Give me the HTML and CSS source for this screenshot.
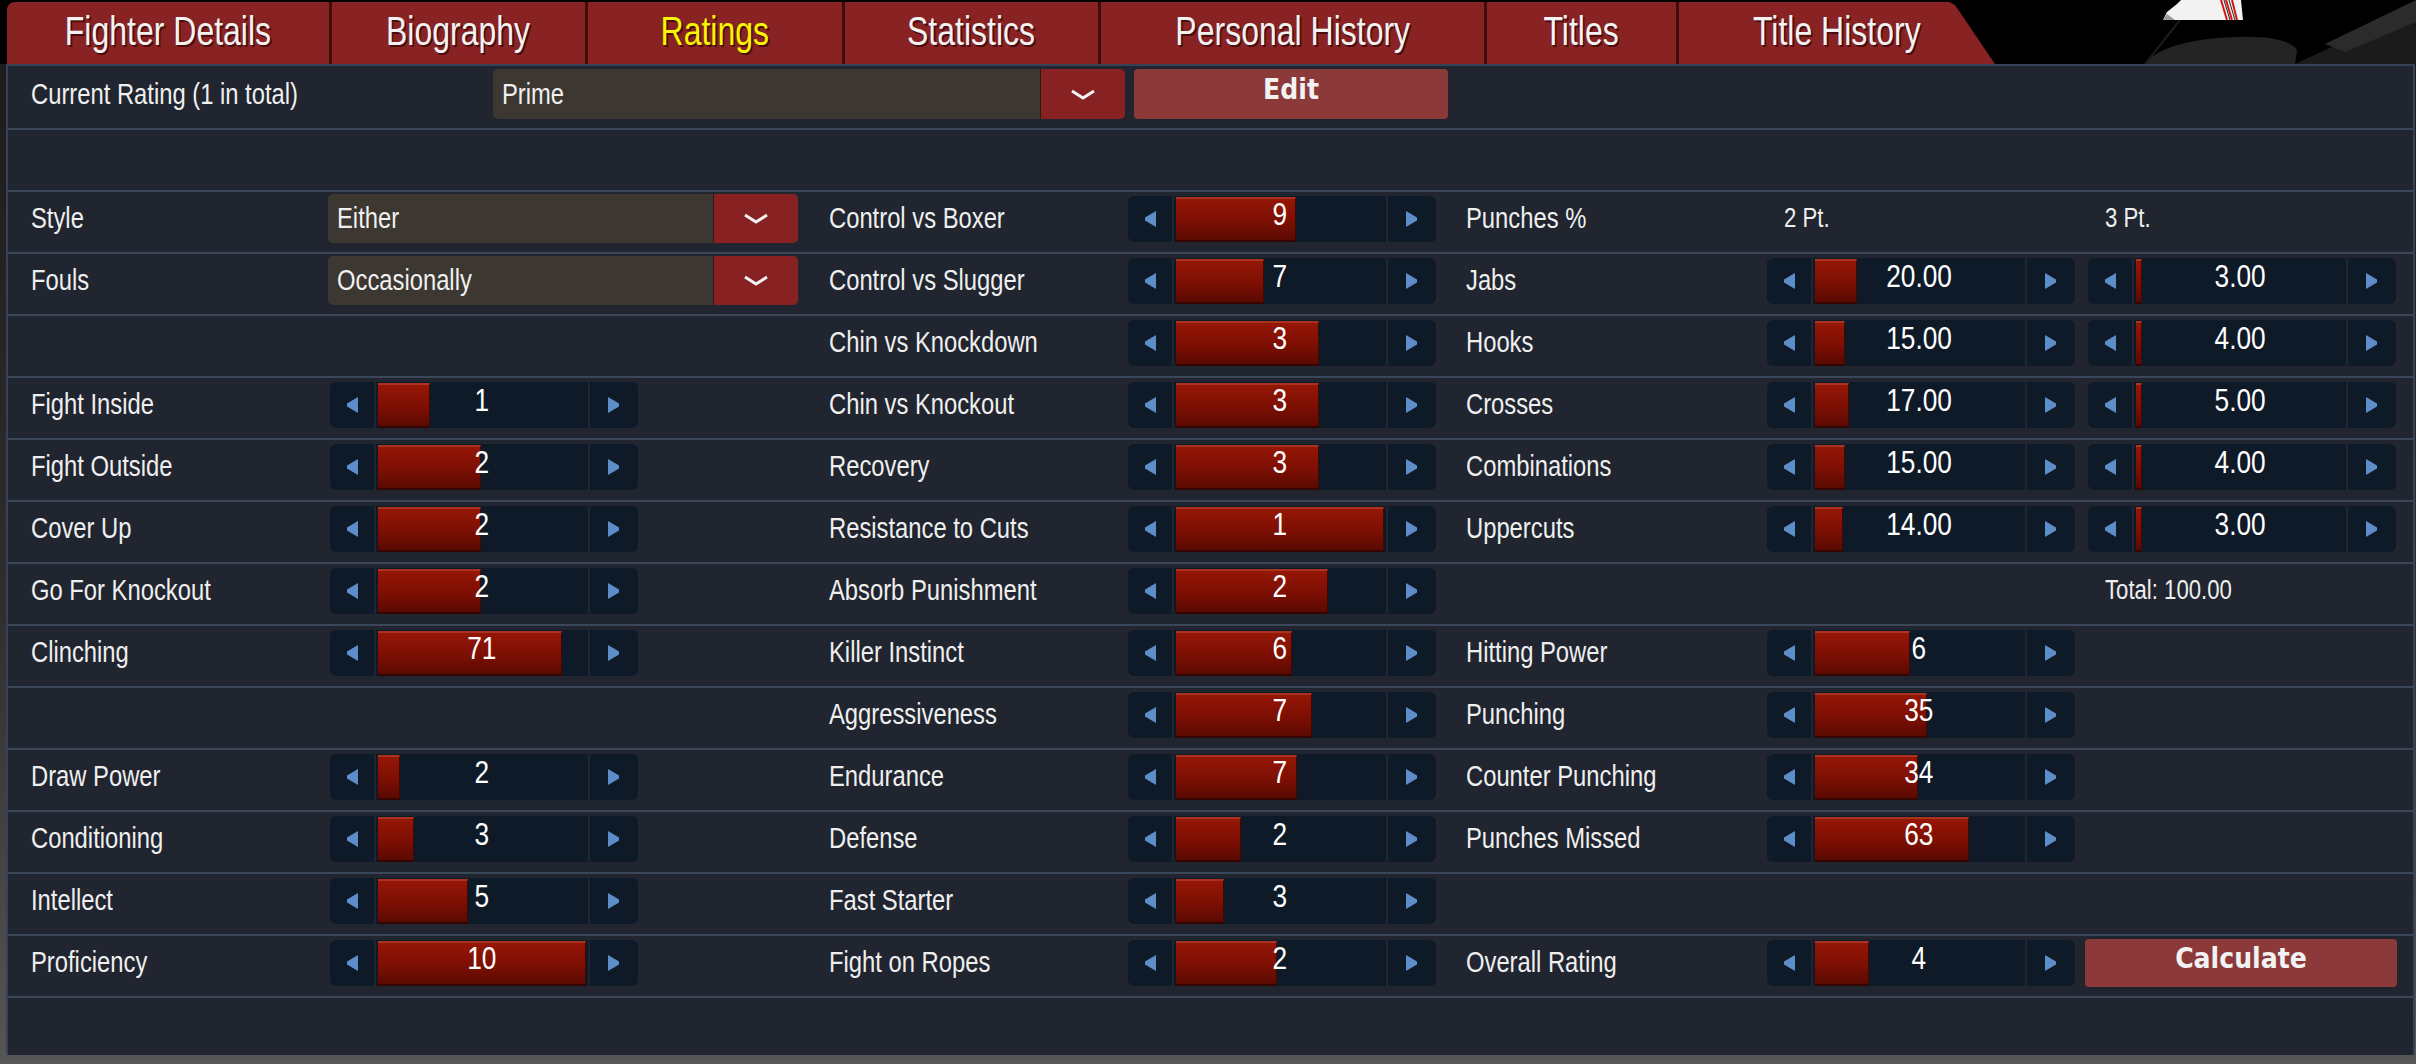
FILE: index.html
```html
<!DOCTYPE html>
<html lang="en">
<head>
<meta charset="utf-8">
<title>Ratings</title>
<link rel="stylesheet" href="styles.css">
</head>
<body>
<div class="tabbar">
  <div class="tabs">
    <div class="tab t1"><span>Fighter Details</span></div>
    <div class="tab t2"><span>Biography</span></div>
    <div class="tab t3 active"><span>Ratings</span></div>
    <div class="tab t4"><span>Statistics</span></div>
    <div class="tab t5"><span>Personal History</span></div>
    <div class="tab t6"><span>Titles</span></div>
    <div class="tab t7"><span>Title History</span></div>
  </div>
  <div class="hero">
    <svg width="421" height="64" viewBox="0 0 421 64">
      <rect width="421" height="64" fill="#000"/>
      <path d="M150 64 Q168 40 240 37 Q292 35 302 50 L300 64 Z" fill="#242424"/>
      <path d="M300 64 L421 8 L421 64 Z" fill="#1b1b1b"/>
      <path d="M330 44 L421 0 L421 22 L350 52 Z" fill="#2b2b2b"/>
      <path d="M185 20 L150 64" stroke="#1e1e1e" stroke-width="2"/>
      <path d="M168 20 L172 12 L182 4 L186 0 L246 0 L248 20 Z" fill="#f2f2f2"/>
      <path d="M172 14 L180 20 L168 20 Z" fill="#9a9a9a"/>
      <path d="M226 0 L232 20 M231 0 L237 20 M237 0 L242 20" stroke="#d01818" stroke-width="2"/>
      <path d="M229 0 L235 20 M234 0 L240 20" stroke="#222" stroke-width="1"/>
    </svg>
  </div>
</div>

<div class="panel">
  <div class="row head">
    <div class="lbl wide">Current Rating (1 in total)</div>
    <div class="dd big"><div class="dd-text"><span>Prime</span></div><div class="dd-btn"><svg class="chev" width="26" height="11" viewBox="0 0 26 11"><path d="M2 2 L13 9 L24 2"/></svg></div></div>
    <div class="btn edit">Edit</div>
  </div>
  <div class="row"></div>

  <div class="row">
    <div class="cell c1"><div class="lbl">Style</div><div class="dd"><div class="dd-text"><span>Either</span></div><div class="dd-btn"><svg class="chev" width="26" height="11" viewBox="0 0 26 11"><path d="M2 2 L13 9 L24 2"/></svg></div></div></div>
    <div class="cell c2"><div class="lbl">Control vs Boxer</div>
      <div class="slider"><div class="arr"><svg width="12" height="16" viewBox="0 0 12 16"><path d="M12 0V16L1 9.5V6.5Z"/></svg></div><div class="track"><div class="fill" style="width:120px"></div><span class="val">9</span></div><div class="arr r"><svg width="12" height="16" viewBox="0 0 12 16"><path d="M0 0V16L11 9.5V6.5Z"/></svg></div></div></div>
    <div class="cell c3"><div class="lbl">Punches %</div><div class="slot"><span>2 Pt.</span></div><div class="slot s2"><span>3 Pt.</span></div></div>
  </div>

  <div class="row">
    <div class="cell c1"><div class="lbl">Fouls</div><div class="dd"><div class="dd-text"><span>Occasionally</span></div><div class="dd-btn"><svg class="chev" width="26" height="11" viewBox="0 0 26 11"><path d="M2 2 L13 9 L24 2"/></svg></div></div></div>
    <div class="cell c2"><div class="lbl">Control vs Slugger</div>
      <div class="slider"><div class="arr"><svg width="12" height="16" viewBox="0 0 12 16"><path d="M12 0V16L1 9.5V6.5Z"/></svg></div><div class="track"><div class="fill" style="width:88px"></div><span class="val">7</span></div><div class="arr r"><svg width="12" height="16" viewBox="0 0 12 16"><path d="M0 0V16L11 9.5V6.5Z"/></svg></div></div></div>
    <div class="cell c3"><div class="lbl">Jabs</div>
      <div class="slider"><div class="arr"><svg width="12" height="16" viewBox="0 0 12 16"><path d="M12 0V16L1 9.5V6.5Z"/></svg></div><div class="track"><div class="fill" style="width:42px"></div><span class="val">20.00</span></div><div class="arr r"><svg width="12" height="16" viewBox="0 0 12 16"><path d="M0 0V16L11 9.5V6.5Z"/></svg></div></div>
      <div class="slider s2"><div class="arr"><svg width="12" height="16" viewBox="0 0 12 16"><path d="M12 0V16L1 9.5V6.5Z"/></svg></div><div class="track"><div class="fill" style="width:6px"></div><span class="val">3.00</span></div><div class="arr r"><svg width="12" height="16" viewBox="0 0 12 16"><path d="M0 0V16L11 9.5V6.5Z"/></svg></div></div></div>
  </div>

  <div class="row">
    <div class="cell c1"></div>
    <div class="cell c2"><div class="lbl">Chin vs Knockdown</div>
      <div class="slider"><div class="arr"><svg width="12" height="16" viewBox="0 0 12 16"><path d="M12 0V16L1 9.5V6.5Z"/></svg></div><div class="track"><div class="fill" style="width:143px"></div><span class="val">3</span></div><div class="arr r"><svg width="12" height="16" viewBox="0 0 12 16"><path d="M0 0V16L11 9.5V6.5Z"/></svg></div></div></div>
    <div class="cell c3"><div class="lbl">Hooks</div>
      <div class="slider"><div class="arr"><svg width="12" height="16" viewBox="0 0 12 16"><path d="M12 0V16L1 9.5V6.5Z"/></svg></div><div class="track"><div class="fill" style="width:30px"></div><span class="val">15.00</span></div><div class="arr r"><svg width="12" height="16" viewBox="0 0 12 16"><path d="M0 0V16L11 9.5V6.5Z"/></svg></div></div>
      <div class="slider s2"><div class="arr"><svg width="12" height="16" viewBox="0 0 12 16"><path d="M12 0V16L1 9.5V6.5Z"/></svg></div><div class="track"><div class="fill" style="width:6px"></div><span class="val">4.00</span></div><div class="arr r"><svg width="12" height="16" viewBox="0 0 12 16"><path d="M0 0V16L11 9.5V6.5Z"/></svg></div></div></div>
  </div>

  <div class="row">
    <div class="cell c1"><div class="lbl">Fight Inside</div>
      <div class="slider"><div class="arr"><svg width="12" height="16" viewBox="0 0 12 16"><path d="M12 0V16L1 9.5V6.5Z"/></svg></div><div class="track"><div class="fill" style="width:52px"></div><span class="val">1</span></div><div class="arr r"><svg width="12" height="16" viewBox="0 0 12 16"><path d="M0 0V16L11 9.5V6.5Z"/></svg></div></div></div>
    <div class="cell c2"><div class="lbl">Chin vs Knockout</div>
      <div class="slider"><div class="arr"><svg width="12" height="16" viewBox="0 0 12 16"><path d="M12 0V16L1 9.5V6.5Z"/></svg></div><div class="track"><div class="fill" style="width:143px"></div><span class="val">3</span></div><div class="arr r"><svg width="12" height="16" viewBox="0 0 12 16"><path d="M0 0V16L11 9.5V6.5Z"/></svg></div></div></div>
    <div class="cell c3"><div class="lbl">Crosses</div>
      <div class="slider"><div class="arr"><svg width="12" height="16" viewBox="0 0 12 16"><path d="M12 0V16L1 9.5V6.5Z"/></svg></div><div class="track"><div class="fill" style="width:34px"></div><span class="val">17.00</span></div><div class="arr r"><svg width="12" height="16" viewBox="0 0 12 16"><path d="M0 0V16L11 9.5V6.5Z"/></svg></div></div>
      <div class="slider s2"><div class="arr"><svg width="12" height="16" viewBox="0 0 12 16"><path d="M12 0V16L1 9.5V6.5Z"/></svg></div><div class="track"><div class="fill" style="width:6px"></div><span class="val">5.00</span></div><div class="arr r"><svg width="12" height="16" viewBox="0 0 12 16"><path d="M0 0V16L11 9.5V6.5Z"/></svg></div></div></div>
  </div>

  <div class="row">
    <div class="cell c1"><div class="lbl">Fight Outside</div>
      <div class="slider"><div class="arr"><svg width="12" height="16" viewBox="0 0 12 16"><path d="M12 0V16L1 9.5V6.5Z"/></svg></div><div class="track"><div class="fill" style="width:103px"></div><span class="val">2</span></div><div class="arr r"><svg width="12" height="16" viewBox="0 0 12 16"><path d="M0 0V16L11 9.5V6.5Z"/></svg></div></div></div>
    <div class="cell c2"><div class="lbl">Recovery</div>
      <div class="slider"><div class="arr"><svg width="12" height="16" viewBox="0 0 12 16"><path d="M12 0V16L1 9.5V6.5Z"/></svg></div><div class="track"><div class="fill" style="width:143px"></div><span class="val">3</span></div><div class="arr r"><svg width="12" height="16" viewBox="0 0 12 16"><path d="M0 0V16L11 9.5V6.5Z"/></svg></div></div></div>
    <div class="cell c3"><div class="lbl">Combinations</div>
      <div class="slider"><div class="arr"><svg width="12" height="16" viewBox="0 0 12 16"><path d="M12 0V16L1 9.5V6.5Z"/></svg></div><div class="track"><div class="fill" style="width:30px"></div><span class="val">15.00</span></div><div class="arr r"><svg width="12" height="16" viewBox="0 0 12 16"><path d="M0 0V16L11 9.5V6.5Z"/></svg></div></div>
      <div class="slider s2"><div class="arr"><svg width="12" height="16" viewBox="0 0 12 16"><path d="M12 0V16L1 9.5V6.5Z"/></svg></div><div class="track"><div class="fill" style="width:6px"></div><span class="val">4.00</span></div><div class="arr r"><svg width="12" height="16" viewBox="0 0 12 16"><path d="M0 0V16L11 9.5V6.5Z"/></svg></div></div></div>
  </div>

  <div class="row">
    <div class="cell c1"><div class="lbl">Cover Up</div>
      <div class="slider"><div class="arr"><svg width="12" height="16" viewBox="0 0 12 16"><path d="M12 0V16L1 9.5V6.5Z"/></svg></div><div class="track"><div class="fill" style="width:103px"></div><span class="val">2</span></div><div class="arr r"><svg width="12" height="16" viewBox="0 0 12 16"><path d="M0 0V16L11 9.5V6.5Z"/></svg></div></div></div>
    <div class="cell c2"><div class="lbl">Resistance to Cuts</div>
      <div class="slider"><div class="arr"><svg width="12" height="16" viewBox="0 0 12 16"><path d="M12 0V16L1 9.5V6.5Z"/></svg></div><div class="track"><div class="fill" style="width:208px"></div><span class="val">1</span></div><div class="arr r"><svg width="12" height="16" viewBox="0 0 12 16"><path d="M0 0V16L11 9.5V6.5Z"/></svg></div></div></div>
    <div class="cell c3"><div class="lbl">Uppercuts</div>
      <div class="slider"><div class="arr"><svg width="12" height="16" viewBox="0 0 12 16"><path d="M12 0V16L1 9.5V6.5Z"/></svg></div><div class="track"><div class="fill" style="width:28px"></div><span class="val">14.00</span></div><div class="arr r"><svg width="12" height="16" viewBox="0 0 12 16"><path d="M0 0V16L11 9.5V6.5Z"/></svg></div></div>
      <div class="slider s2"><div class="arr"><svg width="12" height="16" viewBox="0 0 12 16"><path d="M12 0V16L1 9.5V6.5Z"/></svg></div><div class="track"><div class="fill" style="width:6px"></div><span class="val">3.00</span></div><div class="arr r"><svg width="12" height="16" viewBox="0 0 12 16"><path d="M0 0V16L11 9.5V6.5Z"/></svg></div></div></div>
  </div>

  <div class="row">
    <div class="cell c1"><div class="lbl">Go For Knockout</div>
      <div class="slider"><div class="arr"><svg width="12" height="16" viewBox="0 0 12 16"><path d="M12 0V16L1 9.5V6.5Z"/></svg></div><div class="track"><div class="fill" style="width:103px"></div><span class="val">2</span></div><div class="arr r"><svg width="12" height="16" viewBox="0 0 12 16"><path d="M0 0V16L11 9.5V6.5Z"/></svg></div></div></div>
    <div class="cell c2"><div class="lbl">Absorb Punishment</div>
      <div class="slider"><div class="arr"><svg width="12" height="16" viewBox="0 0 12 16"><path d="M12 0V16L1 9.5V6.5Z"/></svg></div><div class="track"><div class="fill" style="width:152px"></div><span class="val">2</span></div><div class="arr r"><svg width="12" height="16" viewBox="0 0 12 16"><path d="M0 0V16L11 9.5V6.5Z"/></svg></div></div></div>
    <div class="cell c3"><div class="lbl"></div><div class="slot"></div><div class="slot s2"><span>Total: 100.00</span></div></div>
  </div>

  <div class="row">
    <div class="cell c1"><div class="lbl">Clinching</div>
      <div class="slider"><div class="arr"><svg width="12" height="16" viewBox="0 0 12 16"><path d="M12 0V16L1 9.5V6.5Z"/></svg></div><div class="track"><div class="fill" style="width:184px"></div><span class="val">71</span></div><div class="arr r"><svg width="12" height="16" viewBox="0 0 12 16"><path d="M0 0V16L11 9.5V6.5Z"/></svg></div></div></div>
    <div class="cell c2"><div class="lbl">Killer Instinct</div>
      <div class="slider"><div class="arr"><svg width="12" height="16" viewBox="0 0 12 16"><path d="M12 0V16L1 9.5V6.5Z"/></svg></div><div class="track"><div class="fill" style="width:116px"></div><span class="val">6</span></div><div class="arr r"><svg width="12" height="16" viewBox="0 0 12 16"><path d="M0 0V16L11 9.5V6.5Z"/></svg></div></div></div>
    <div class="cell c3"><div class="lbl">Hitting Power</div>
      <div class="slider"><div class="arr"><svg width="12" height="16" viewBox="0 0 12 16"><path d="M12 0V16L1 9.5V6.5Z"/></svg></div><div class="track"><div class="fill" style="width:95px"></div><span class="val">6</span></div><div class="arr r"><svg width="12" height="16" viewBox="0 0 12 16"><path d="M0 0V16L11 9.5V6.5Z"/></svg></div></div></div>
  </div>

  <div class="row">
    <div class="cell c1"></div>
    <div class="cell c2"><div class="lbl">Aggressiveness</div>
      <div class="slider"><div class="arr"><svg width="12" height="16" viewBox="0 0 12 16"><path d="M12 0V16L1 9.5V6.5Z"/></svg></div><div class="track"><div class="fill" style="width:136px"></div><span class="val">7</span></div><div class="arr r"><svg width="12" height="16" viewBox="0 0 12 16"><path d="M0 0V16L11 9.5V6.5Z"/></svg></div></div></div>
    <div class="cell c3"><div class="lbl">Punching</div>
      <div class="slider"><div class="arr"><svg width="12" height="16" viewBox="0 0 12 16"><path d="M12 0V16L1 9.5V6.5Z"/></svg></div><div class="track"><div class="fill" style="width:112px"></div><span class="val">35</span></div><div class="arr r"><svg width="12" height="16" viewBox="0 0 12 16"><path d="M0 0V16L11 9.5V6.5Z"/></svg></div></div></div>
  </div>

  <div class="row">
    <div class="cell c1"><div class="lbl">Draw Power</div>
      <div class="slider"><div class="arr"><svg width="12" height="16" viewBox="0 0 12 16"><path d="M12 0V16L1 9.5V6.5Z"/></svg></div><div class="track"><div class="fill" style="width:22px"></div><span class="val">2</span></div><div class="arr r"><svg width="12" height="16" viewBox="0 0 12 16"><path d="M0 0V16L11 9.5V6.5Z"/></svg></div></div></div>
    <div class="cell c2"><div class="lbl">Endurance</div>
      <div class="slider"><div class="arr"><svg width="12" height="16" viewBox="0 0 12 16"><path d="M12 0V16L1 9.5V6.5Z"/></svg></div><div class="track"><div class="fill" style="width:121px"></div><span class="val">7</span></div><div class="arr r"><svg width="12" height="16" viewBox="0 0 12 16"><path d="M0 0V16L11 9.5V6.5Z"/></svg></div></div></div>
    <div class="cell c3"><div class="lbl">Counter Punching</div>
      <div class="slider"><div class="arr"><svg width="12" height="16" viewBox="0 0 12 16"><path d="M12 0V16L1 9.5V6.5Z"/></svg></div><div class="track"><div class="fill" style="width:103px"></div><span class="val">34</span></div><div class="arr r"><svg width="12" height="16" viewBox="0 0 12 16"><path d="M0 0V16L11 9.5V6.5Z"/></svg></div></div></div>
  </div>

  <div class="row">
    <div class="cell c1"><div class="lbl">Conditioning</div>
      <div class="slider"><div class="arr"><svg width="12" height="16" viewBox="0 0 12 16"><path d="M12 0V16L1 9.5V6.5Z"/></svg></div><div class="track"><div class="fill" style="width:36px"></div><span class="val">3</span></div><div class="arr r"><svg width="12" height="16" viewBox="0 0 12 16"><path d="M0 0V16L11 9.5V6.5Z"/></svg></div></div></div>
    <div class="cell c2"><div class="lbl">Defense</div>
      <div class="slider"><div class="arr"><svg width="12" height="16" viewBox="0 0 12 16"><path d="M12 0V16L1 9.5V6.5Z"/></svg></div><div class="track"><div class="fill" style="width:65px"></div><span class="val">2</span></div><div class="arr r"><svg width="12" height="16" viewBox="0 0 12 16"><path d="M0 0V16L11 9.5V6.5Z"/></svg></div></div></div>
    <div class="cell c3"><div class="lbl">Punches Missed</div>
      <div class="slider"><div class="arr"><svg width="12" height="16" viewBox="0 0 12 16"><path d="M12 0V16L1 9.5V6.5Z"/></svg></div><div class="track"><div class="fill" style="width:154px"></div><span class="val">63</span></div><div class="arr r"><svg width="12" height="16" viewBox="0 0 12 16"><path d="M0 0V16L11 9.5V6.5Z"/></svg></div></div></div>
  </div>

  <div class="row">
    <div class="cell c1"><div class="lbl">Intellect</div>
      <div class="slider"><div class="arr"><svg width="12" height="16" viewBox="0 0 12 16"><path d="M12 0V16L1 9.5V6.5Z"/></svg></div><div class="track"><div class="fill" style="width:90px"></div><span class="val">5</span></div><div class="arr r"><svg width="12" height="16" viewBox="0 0 12 16"><path d="M0 0V16L11 9.5V6.5Z"/></svg></div></div></div>
    <div class="cell c2"><div class="lbl">Fast Starter</div>
      <div class="slider"><div class="arr"><svg width="12" height="16" viewBox="0 0 12 16"><path d="M12 0V16L1 9.5V6.5Z"/></svg></div><div class="track"><div class="fill" style="width:48px"></div><span class="val">3</span></div><div class="arr r"><svg width="12" height="16" viewBox="0 0 12 16"><path d="M0 0V16L11 9.5V6.5Z"/></svg></div></div></div>
    <div class="cell c3"></div>
  </div>

  <div class="row">
    <div class="cell c1"><div class="lbl">Proficiency</div>
      <div class="slider"><div class="arr"><svg width="12" height="16" viewBox="0 0 12 16"><path d="M12 0V16L1 9.5V6.5Z"/></svg></div><div class="track"><div class="fill" style="width:208px"></div><span class="val">10</span></div><div class="arr r"><svg width="12" height="16" viewBox="0 0 12 16"><path d="M0 0V16L11 9.5V6.5Z"/></svg></div></div></div>
    <div class="cell c2"><div class="lbl">Fight on Ropes</div>
      <div class="slider"><div class="arr"><svg width="12" height="16" viewBox="0 0 12 16"><path d="M12 0V16L1 9.5V6.5Z"/></svg></div><div class="track"><div class="fill" style="width:101px"></div><span class="val">2</span></div><div class="arr r"><svg width="12" height="16" viewBox="0 0 12 16"><path d="M0 0V16L11 9.5V6.5Z"/></svg></div></div></div>
    <div class="cell c3"><div class="lbl">Overall Rating</div>
      <div class="slider"><div class="arr"><svg width="12" height="16" viewBox="0 0 12 16"><path d="M12 0V16L1 9.5V6.5Z"/></svg></div><div class="track"><div class="fill" style="width:54px"></div><span class="val">4</span></div><div class="arr r"><svg width="12" height="16" viewBox="0 0 12 16"><path d="M0 0V16L11 9.5V6.5Z"/></svg></div></div>
      <div class="btn calc">Calculate</div></div>
  </div>
</div>
</body>
</html>
```

FILE: styles.css
```css
* { box-sizing: border-box; }
html, body { margin: 0; padding: 0; }
body {
  width: 2416px;
  height: 1064px;
  overflow: hidden;
  background: linear-gradient(#000 0, #000 64px, #1c1c1c 64px, #2e2e2e 600px, #555 1055px, #585858 1064px);
  font-family: "Liberation Sans", Arial, sans-serif;
  color: #eeeeee;
}

/* ---------- tabs ---------- */
.tabbar {
  display: flex;
  height: 64px;
  background: #000;
  padding-left: 7px;
}
.tabs {
  display: flex;
  padding-top: 2px;
}
.tab {
  height: 62px;
  background: #892222;
  color: #f2f2f2;
  font-size: 40px;
  line-height: 58px;
  text-align: center;
  text-shadow: 2px 2px 0 #4a0c0c;
  white-space: nowrap;
}
.tab span {
  display: inline-block;
  transform: scaleX(0.8);
}
.tab + .tab { border-left: 3px solid #3e0e0e; }
.tab.active { color: #f6f600; }
.t1 { width: 322px; border-top-left-radius: 8px; }
.t2 { width: 256px; }
.t3 { width: 257px; }
.t4 { width: 256px; }
.t5 { width: 386px; }
.t6 { width: 192px; }
.t7 {
  width: 319px;
  clip-path: polygon(0 0, calc(100% - 46px) 0, calc(100% - 40px) 3px, 100% 100%, 0 100%);
}
.hero { flex: 1; height: 64px; overflow: hidden; }
.hero svg { display: block; }

/* ---------- panel ---------- */
.panel {
  margin-left: 6px;
  width: 2409px;
  height: 991px;
  background: #20252f;
  border: 2px solid #364356;
  border-bottom: none;
}
.row {
  display: flex;
  align-items: center;
  height: 62px;
  padding: 2px 0 9px 23px;
  border-bottom: 2px solid #394759;
}
.row.head {
  height: 64px;
  padding-top: 3px;
}
.cell {
  display: flex;
  align-items: center;
  height: 100%;
}
.c1 { width: 798px; }
.c2 { width: 637px; }
.c3 { flex: 1; }

.lbl {
  font-size: 29px;
  color: #efefef;
  white-space: nowrap;
  transform: scaleX(0.82);
  transform-origin: 0 50%;
}
.c1 .lbl { width: 297px; }
.c2 .lbl { width: 299px; }
.c3 .lbl { width: 301px; }
.lbl.wide { width: 462px; }

/* ---------- dropdown ---------- */
.dd {
  display: flex;
  width: 470px;
  height: 49px;
  border-radius: 5px;
  overflow: hidden;
  background: #3c3731;
}
.dd.big { width: 632px; height: 50px; }
.dd-text {
  flex: 1;
  display: flex;
  align-items: center;
  padding-left: 9px;
  font-size: 29px;
  color: #f0f0f0;
  white-space: nowrap;
}
.dd-text span {
  display: inline-block;
  transform: scaleX(0.82);
  transform-origin: 0 50%;
}
.dd-btn {
  width: 85px;
  display: flex;
  align-items: center;
  justify-content: center;
  background: #882222;
  border-left: 1px solid #2b1a18;
}
.chev path {
  fill: none;
  stroke: #f4f4f4;
  stroke-width: 3;
  stroke-linejoin: round;
}

/* ---------- buttons ---------- */
.btn {
  display: flex;
  align-items: center;
  justify-content: center;
  background: #8b3939;
  border-radius: 4px;
  color: #f2f2f2;
  font-family: "DejaVu Sans Condensed", "DejaVu Sans", sans-serif;
  font-stretch: condensed;
  font-weight: bold;
  font-size: 28px;
}
.edit { width: 314px; height: 50px; margin-left: 9px; padding-bottom: 9px; }
.calc { width: 312px; height: 48px; margin-left: 10px; padding-bottom: 9px; }

/* ---------- slider ---------- */
.slider {
  display: flex;
  gap: 2px;
  width: 308px;
  height: 46px;
  flex: none;
}
.c1 .slider { margin-left: 2px; }
.slider.s2 { margin-left: 13px; }
.arr {
  width: 44px;
  display: flex;
  align-items: center;
  justify-content: center;
  background: #0e1a28;
  border-radius: 6px 0 0 6px;
}
.arr.r { width: 48px; border-radius: 0 6px 6px 0; }
.arr svg { display: block; fill: #5e8ec9; }
.track {
  flex: 1;
  display: grid;
  background: #0e1a28;
}
.fill, .val { grid-area: 1 / 1; }
.fill {
  justify-self: start;
  margin: 1px 0 0 2px;
  background: linear-gradient(#951606, #7c0f03 55%, #5a0a02);
  border-top: 2px solid #aa3320;
  border-bottom: 2px solid #350502;
  border-right: 1px solid #420703;
}
.val {
  justify-self: center;
  align-self: center;
  margin-bottom: 8px;
  font-size: 32px;
  color: #ffffff;
  white-space: nowrap;
  transform: scaleX(0.82);
}

.slot {
  width: 308px;
  padding-left: 17px;
  font-size: 27px;
  color: #efefef;
  white-space: nowrap;
}
.slot span {
  display: inline-block;
  transform: scaleX(0.82);
  transform-origin: 0 50%;
}
.slot.s2 { margin-left: 13px; }
```
